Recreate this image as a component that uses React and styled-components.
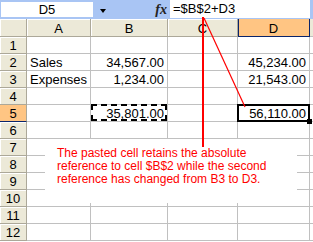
import styled, { createGlobalStyle, css } from "styled-components";

const GlobalStyle = createGlobalStyle`
  html, body {
    margin: 0;
    padding: 0;
    background: #fff;
    overflow: hidden;
  }
  body {
    font-family: "Liberation Sans", Arial, sans-serif;
  }
`;

const COLS = ["A", "B", "C", "D"];

const CELLS = {
  "A2": { text: "Sales" },
  "B2": { text: "34,567.00", num: true },
  "D2": { text: "45,234.00", num: true },
  "A3": { text: "Expenses" },
  "B3": { text: "1,234.00", num: true },
  "D3": { text: "21,543.00", num: true },
  "B5": { text: "35,801.00", num: true, copied: true },
  "D5": { text: "56,110.00", num: true, active: true },
};

const ROWS = Array.from({ length: 12 }, (_, i) => i + 1);

export default function App() {
  return (
    <Screen>
      <GlobalStyle />

      <FormulaBar>
        <NameBox>D5</NameBox>
        <DropArea>
          <Arrow />
          <Fx>fx</Fx>
        </DropArea>
        <FormulaInput>=$B$2+D3</FormulaInput>
      </FormulaBar>

      <Sheet>
        <Corner />
        {COLS.map((c) => (
          <ColHead key={c} $selected={c === "D"}>
            {c}
          </ColHead>
        ))}
        <Edge $head />

        {ROWS.map((r) => (
          <Row key={r} r={r} />
        ))}
      </Sheet>

      <Callout>
        The pasted cell retains the absolute reference to cell $B$2 while the
        second reference has changed from B3 to D3.
      </Callout>

      <Pointers width="313" height="242" viewBox="0 0 313 242">
        <line x1="203" y1="17" x2="203" y2="147" stroke="#ff0000" strokeWidth="2" />
        <line x1="204" y1="18" x2="245" y2="107" stroke="#ff0000" strokeWidth="1.2" />
      </Pointers>
    </Screen>
  );
}

function Row({ r }) {
  return (
    <>
      <RowHead $selected={r === 5}>{r}</RowHead>
      {COLS.map((c) => {
        const cell = CELLS[c + r] || {};
        return (
          <Cell
            key={c}
            $num={cell.num}
            $copied={cell.copied}
            $active={cell.active}
          >
            {cell.text}
          </Cell>
        );
      })}
      <Edge />
    </>
  );
}

const Screen = styled.div`
  position: relative;
  width: 313px;
  height: 242px;
  overflow: hidden;
  background: #fff;
`;

const FormulaBar = styled.div`
  display: flex;
  align-items: flex-start;
  height: 19px;
  background: #a9c5f4;
  font-size: 13px;
  color: #000;
`;

const NameBox = styled.div`
  width: 92px;
  height: 15px;
  margin: 2px 0 0 1px;
  background: #fff;
  text-align: center;
  line-height: 15px;
`;

const DropArea = styled.div`
  display: flex;
  align-items: flex-start;
  width: 77px;
  height: 19px;
`;

const Arrow = styled.span`
  width: 0;
  height: 0;
  margin: 9px 0 0 7px;
  border-top: 4px solid #000;
  border-left: 3px solid transparent;
  border-right: 3px solid transparent;
`;

const Fx = styled.span`
  margin: 2px 3px 0 auto;
  font-family: "Liberation Serif", "Times New Roman", serif;
  font-style: italic;
  font-weight: 700;
  font-size: 14px;
  line-height: 15px;
  color: #222;
`;

const FormulaInput = styled.div`
  width: 137px;
  height: 18px;
  padding-left: 3px;
  background: #fff;
  line-height: 18px;
`;

const Sheet = styled.div`
  display: grid;
  grid-template-columns: 27px 64px 77px 70px 72px 3px;
  grid-template-rows: 18px repeat(12, 17px);
  font-size: 13px;
  color: #000;
`;

const headBase = css`
  box-sizing: border-box;
  background: #ece9d8;
  border-right: 1px solid #aca899;
  border-bottom: 1px solid #aca899;
  box-shadow: inset 1px 1px 0 #fff;
  text-align: center;
`;

const selectedHead = css`
  background: #ffc583;
  box-shadow: none;
`;

const Corner = styled.div`
  ${headBase}
`;

const ColHead = styled.div`
  ${headBase}
  line-height: 19px;
  ${(p) =>
    p.$selected &&
    css`
      ${selectedHead}
      border-right-color: #0a246a;
      border-bottom: 1px solid #0a246a;
      box-shadow: inset 1px 0 0 #0a246a;
    `}
`;

const RowHead = styled.div`
  ${headBase}
  line-height: 17px;
  ${(p) =>
    p.$selected &&
    css`
      ${selectedHead}
      border-bottom-color: #0a246a;
    `}
`;

const Cell = styled.div`
  position: relative;
  box-sizing: border-box;
  padding: 0 3px 0 3px;
  border-right: 1px solid #c0c0c0;
  border-bottom: 1px solid #c0c0c0;
  line-height: 17px;
  white-space: nowrap;
  text-align: ${(p) => (p.$num ? "right" : "left")};

  ${(p) =>
    p.$copied &&
    css`
      &::after {
        content: "";
        position: absolute;
        inset: -1px 0 0 0;
        border: 2px dashed #000;
      }
    `}

  ${(p) =>
    p.$active &&
    css`
      &::after {
        content: "";
        position: absolute;
        inset: -1px -1px -1px -1px;
        border: 2px solid #000;
      }
      &::before {
        content: "";
        position: absolute;
        right: -3px;
        bottom: -3px;
        width: 5px;
        height: 5px;
        background: #000;
        z-index: 1;
      }
    `}
`;

const Edge = styled.div`
  box-sizing: border-box;
  background: ${(p) => (p.$head ? "#ece9d8" : "#fff")};
  border-bottom: 1px solid #c0c0c0;
`;

const Callout = styled.div`
  position: absolute;
  left: 45px;
  top: 139px;
  width: 252px;
  height: 64px;
  box-sizing: border-box;
  padding: 8px 8px 0 12px;
  background: #fff;
  color: #ff0000;
  font-size: 12px;
  line-height: 13px;
`;

const Pointers = styled.svg`
  position: absolute;
  left: 0;
  top: 0;
  pointer-events: none;
`;
